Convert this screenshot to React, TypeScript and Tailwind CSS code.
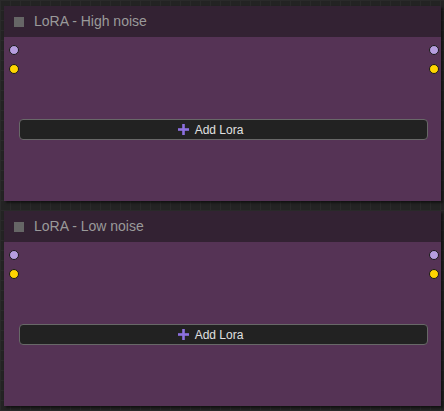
import React from "react";

function Dot({ color }: { color: string }) {
  return <span className={`block h-[10px] w-[10px] rounded-full border border-[#1a1a1a] ${color}`} />;
}

function LoraNode({ title }: { title: string }) {
  return (
    <div className="w-[437px] shadow-[2px_2px_2px_rgba(0,0,0,0.5)]">
      <div className="flex h-[31px] items-center gap-[10px] bg-[#332233] pl-[10px]">
        <span className="block h-[10px] w-[10px] bg-[#666666]" />
        <span className="text-[14px] text-[#9a9a9a]">{title}</span>
      </div>
      <div className="flex h-[164px] flex-col bg-[#553355] pl-[5px] pr-[2px] pt-[8px]">
        <div className="flex items-center justify-between">
          <Dot color="bg-[#b69ee0]" />
          <Dot color="bg-[#b69ee0]" />
        </div>
        <div className="mt-[9px] flex items-center justify-between">
          <Dot color="bg-[#ffd500]" />
          <Dot color="bg-[#ffd500]" />
        </div>
        <button className="ml-[10px] mr-[11px] mt-[45px] flex h-[21px] items-center justify-center gap-[6px] rounded-[4px] border border-[#686868] bg-[#222222] pr-[26px] text-[12px] text-[#e0e0e0]">
          <svg width="11" height="11" viewBox="0 0 11 11">
            <rect x="4.2" y="0" width="2.6" height="11" fill="#8d70e0" />
            <rect x="0" y="4.2" width="11" height="2.6" fill="#8d70e0" />
          </svg>
          Add Lora
        </button>
      </div>
    </div>
  );
}

export default function App() {
  return (
    <div
      className="flex h-[411px] w-[444px] flex-col gap-[10px] overflow-hidden bg-[#232323] bg-[linear-gradient(#2a2a2a_1px,transparent_1px),linear-gradient(90deg,#2a2a2a_1px,transparent_1px)] bg-[size:10px_10px] pl-[4px] pt-[6px]"
      style={{ fontFamily: '"Liberation Sans", Arial, sans-serif' }}
    >
      <LoraNode title="LoRA - High noise" />
      <LoraNode title="LoRA - Low noise" />
    </div>
  );
}
